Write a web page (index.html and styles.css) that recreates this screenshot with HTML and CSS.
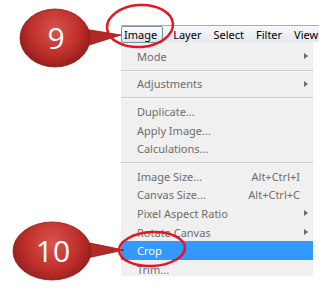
FILE: index.html
```html
<!DOCTYPE html>
<html>
<head>
    <meta charset="utf-8">
    <link rel="stylesheet" href="styles.css">
</head>
<body>
    <div class="shot">
        <!-- application menu bar -->
        <div class="menubar">
            <span class="menubar-item is-open">Image</span>
            <span class="menubar-item">Layer</span>
            <span class="menubar-item">Select</span>
            <span class="menubar-item">Filter</span>
            <span class="menubar-item">View</span>
        </div>

        <!-- Image dropdown -->
        <ul class="menu">
            <li class="menu-item has-sub"><span class="label">Mode</span></li>
            <li class="menu-sep"></li>
            <li class="menu-item has-sub"><span class="label">Adjustments</span></li>
            <li class="menu-sep"></li>
            <li class="menu-item"><span class="label">Duplicate...</span></li>
            <li class="menu-item"><span class="label">Apply Image...</span></li>
            <li class="menu-item"><span class="label">Calculations...</span></li>
            <li class="menu-sep"></li>
            <li class="menu-item"><span class="label">Image Size...</span><span class="shortcut">Alt+Ctrl+I</span></li>
            <li class="menu-item"><span class="label">Canvas Size...</span><span class="shortcut">Alt+Ctrl+C</span></li>
            <li class="menu-item has-sub"><span class="label">Pixel Aspect Ratio</span></li>
            <li class="menu-item has-sub"><span class="label">Rotate Canvas</span></li>
            <li class="menu-item is-active"><span class="label">Crop</span></li>
            <li class="menu-item"><span class="label">Trim...</span></li>
        </ul>

        <!-- step callouts drawn over the screenshot -->
        <svg class="annotations" width="319" height="294" viewBox="0 0 319 294">
            <defs>
                <radialGradient id="bubble9" gradientUnits="userSpaceOnUse" cx="55" cy="30" r="40">
                    <stop offset="0" stop-color="#d9544e"/>
                    <stop offset="0.6" stop-color="#bf302b"/>
                    <stop offset="1" stop-color="#8f1b19"/>
                </radialGradient>
                <radialGradient id="bubble10" gradientUnits="userSpaceOnUse" cx="52" cy="243" r="44">
                    <stop offset="0" stop-color="#d9544e"/>
                    <stop offset="0.6" stop-color="#bf302b"/>
                    <stop offset="1" stop-color="#8f1b19"/>
                </radialGradient>
            </defs>

            <g class="bubble">
                <path d="M84 29 L121 35 L86 46 Z" fill="#b32925" stroke="#8a1a18" stroke-width="0.8"/>
                <ellipse cx="55" cy="38" rx="35" ry="29" fill="url(#bubble9)" stroke="#8a1a18" stroke-width="0.8"/>
                <text x="56" y="49" class="bubble-num">9</text>
            </g>
            <ellipse cx="140" cy="26" rx="33" ry="21" transform="rotate(-4 140 26)" class="ring"/>

            <g class="bubble">
                <path d="M85 242 L124 250 L87 258 Z" fill="#b32925" stroke="#8a1a18" stroke-width="0.8"/>
                <ellipse cx="52" cy="251" rx="39" ry="29" fill="url(#bubble10)" stroke="#8a1a18" stroke-width="0.8"/>
                <text x="53" y="262" class="bubble-num">10</text>
            </g>
            <ellipse cx="152" cy="249" rx="33" ry="17" transform="rotate(-3 152 249)" class="ring"/>
        </svg>
    </div>
</body>
</html>
```
FILE: styles.css
```css
html, body {
    margin: 0;
    background: #fff;
}

.shot {
    position: relative;
    width: 319px;
    height: 294px;
    overflow: hidden;
    padding-top: 25px;
    box-sizing: border-box;
    font-family: "Noto Sans", "Open Sans", sans-serif;
    font-size: 11px;
}

.menubar {
    display: flex;
    align-items: center;
    margin-left: 121px;
    height: 17px;
    border-top: 1px solid #a7abb0;
    background: linear-gradient(#f6f8fb, #e4e9f0);
    color: #000;
    white-space: nowrap;
    box-sizing: border-box;
}

.menubar-item {
    padding: 0 6px;
    line-height: 15px;
}

.menubar-item.is-open {
    padding: 0 5px 0 2px;
    margin-right: 4px;
    border: 1px solid #7e8ea3;
    border-radius: 2px;
    background: linear-gradient(#fbfcfd, #dde3eb);
}

.menu {
    list-style: none;
    margin: 0 0 0 121px;
    padding: 5px 0 0;
    width: 192px;
    height: 234px;
    overflow: hidden;
    background: #f0f0f0;
    box-sizing: border-box;
    color: #6d6d6d;
}

.menu-item {
    display: flex;
    align-items: center;
    height: 18.6px;
    padding: 0 5px 0 16px;
    white-space: nowrap;
}

.menu-item .label {
    flex: 1;
}

.menu-item .shortcut {
    margin-right: 8px;
}

.menu-item.has-sub::after {
    content: "";
    width: 0;
    height: 0;
    border-left: 4px solid #6a6a6a;
    border-top: 3.5px solid transparent;
    border-bottom: 3.5px solid transparent;
}

.menu-item.is-active {
    background: #3399ff;
    color: #fff;
}

.menu-sep {
    height: 1px;
    margin: 4px 0 3px;
    background: #c8c8c8;
    border-bottom: 1px solid #fafafa;
    box-sizing: content-box;
}

.annotations {
    position: absolute;
    top: 0;
    left: 0;
    pointer-events: none;
}

.bubble-num {
    fill: #fff;
    font-family: "Open Sans", sans-serif;
    font-size: 30px;
    text-anchor: middle;
}

.ring {
    fill: none;
    stroke: #e3171f;
    stroke-width: 2.5;
}
```
